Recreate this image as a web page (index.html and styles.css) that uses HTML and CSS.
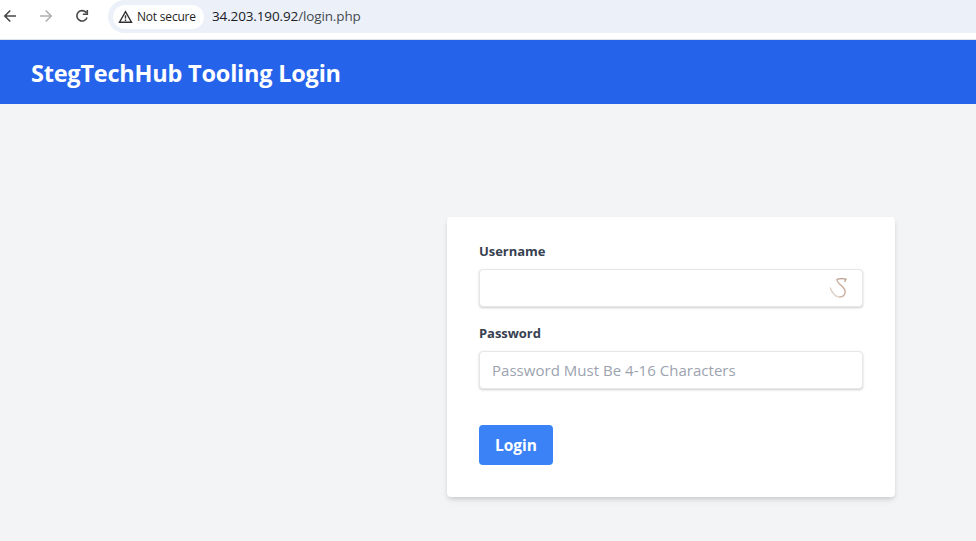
FILE: index.html
```html
<!DOCTYPE html>
<html lang="en">
<head>
<meta charset="utf-8">
<title>StegTechHub Tooling Login</title>
<link rel="stylesheet" href="styles.css">
</head>
<body>
<div class="toolbar">
  <svg class="nav-icons" width="108" height="32" viewBox="0 0 108 32" fill="none" stroke-width="1.6">
    <path d="M16 16H5M10.300 10.500L4.800 16l5.500 5.500" stroke="#474747"/>
    <path d="M40 16h11M45.700 10.500l5.500 5.500-5.500 5.500" stroke="#b0b0b0"/>
    <path d="M86.300 12.800A5.200 5.200 0 1 0 87 17.500M87.300 10v4.300h-4.500" stroke="#474747"/>
  </svg>
  <div class="address">
    <div class="chip">
      <svg width="15" height="14" viewBox="0 0 15 14" fill="none" stroke="#303133" stroke-width="1.400">
        <path d="M7.500 1.700L13.500 12.200H1.500Z"/>
        <path d="M7.500 5.300v3.200M7.500 9.600v1.400"/>
      </svg>
      <span class="chip-text">Not secure</span>
    </div>
    <span class="url">34.203.190.92<span class="path">/login.php</span></span>
  </div>
</div>
<header class="header"><h1>StegTechHub Tooling Login</h1></header>
<main class="main">
  <form class="card">
    <label for="username">Username</label>
    <div class="field">
      <input id="username" type="text">
      <svg class="field-mark" width="20" height="22" viewBox="0 0 20 22" fill="none" stroke-linecap="round">
        <path d="M8 2.300Q12.500 .9 17 2.200L15.800 4.500" stroke="#b99d8c" stroke-width="1.300"/>
        <path d="M8.200 2.500C7 6.500 16.300 9.500 16.200 14.500C16 18.500 13.500 20 10.500 20" stroke="#cdb3a4" stroke-width="1.500"/>
        <path d="M10.500 20C6 19.500 3 14.500 1.300 10.500C1.500 14 4.500 18.500 8.500 20" fill="#eee7e2" stroke="#ddd0c6" stroke-width="1"/>
      </svg>
    </div>
    <label for="password">Password</label>
    <div class="field"><input id="password" type="password" placeholder="Password Must Be 4-16 Characters"></div>
    <button type="button">Login</button>
  </form>
</main>
</body>
</html>
```
FILE: styles.css
```css
* { box-sizing: border-box; }
body {
  margin: 0;
  height: 541px;
  overflow: hidden;
  background: #f3f4f6;
  font-family: "Open Sans", "Noto Sans", sans-serif;
}
.toolbar {
  display: flex;
  height: 40px;
  padding-bottom: 7px;
  background: #fff;
  border-bottom: 1px solid #dfe3ea;
}
.nav-icons { flex: none; }
.address {
  flex: 1;
  display: flex;
  align-items: center;
  height: 33px;
  padding-left: 5px;
  border-radius: 17px 0 0 17px;
  background: #ebf0f9;
}
.chip {
  display: flex;
  align-items: center;
  width: 91px;
  height: 24px;
  padding-left: 5px;
  border-radius: 12px;
  background: #fff;
}
.chip-text {
  margin-left: 4px;
  margin-top: -1px;
  color: #1f1f1f;
  font-size: 12px;
  letter-spacing: -.2px;
  white-space: nowrap;
}
.url {
  margin-left: 8px;
  margin-top: -1px;
  color: #202124;
  font-size: 13.5px;
  letter-spacing: -.13px;
  white-space: nowrap;
}
.path { color: #474b50; }
.header {
  display: flex;
  align-items: center;
  height: 64px;
  padding: 1px 31px 0;
  background: #2563eb;
}
h1 {
  margin: 0;
  color: #fff;
  font-size: 23.5px;
  letter-spacing: -.22px;
  line-height: 32px;
  font-weight: 700;
  white-space: nowrap;
}
.main { padding: 113px 81px 0 447px; }
.card {
  width: 448px;
  height: 280px;
  padding: 24px 32px 32px;
  border-radius: 4px;
  background: #fff;
  box-shadow: 0 4px 6px -1px rgba(0, 0, 0, .1), 0 2px 4px -1px rgba(0, 0, 0, .1);
}
label {
  display: block;
  margin-bottom: 8px;
  color: #374151;
  font-size: 13px;
  letter-spacing: -.05px;
  line-height: 20px;
  font-weight: 700;
}
.field {
  display: flex;
  align-items: center;
  justify-content: flex-end;
  position: relative;
  height: 38px;
  margin-bottom: 16px;
}
input {
  width: 100%;
  height: 38px;
  padding: 0 12px;
  border: 1px solid #e5e7eb;
  border-radius: 4px;
  background: #fff;
  box-shadow: 0 1px 3px rgba(0, 0, 0, .1), 0 1px 2px rgba(0, 0, 0, .1);
  font: 15px "Open Sans", "Noto Sans", sans-serif;
  letter-spacing: .03px;
}
input::placeholder { color: #9ca3af; opacity: 1; }
.field-mark { position: absolute; right: 14px; top: 8px; }
button {
  display: block;
  width: 74px;
  height: 40px;
  margin-top: 36px;
  padding: 0;
  border: 0;
  border-radius: 4px;
  background: #3b82f6;
  color: #fff;
  font: 700 15.5px "Open Sans", "Noto Sans", sans-serif;
}
```
